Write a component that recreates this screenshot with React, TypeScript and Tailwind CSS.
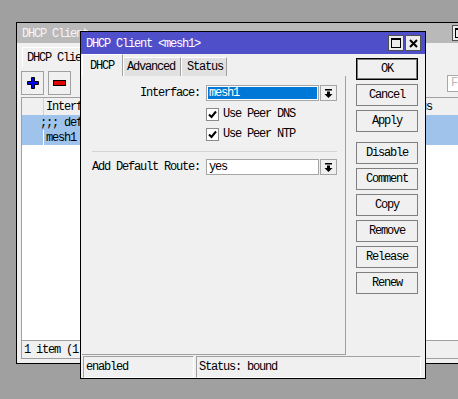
import React from "react";

const mono = "font-mono text-[12px] leading-[14px] tracking-[-1.2px]";

function MaxIcon() {
  return (
    <svg width="10" height="10" viewBox="0 0 10 10">
      <rect x="0.5" y="0.5" width="9" height="9" fill="none" stroke="#000" />
      <rect x="0" y="0" width="10" height="2" fill="#000" />
    </svg>
  );
}

function CloseIcon() {
  return (
    <svg width="9" height="9" viewBox="0 0 9 9">
      <path d="M1 1 L8 8 M8 1 L1 8" stroke="#000" strokeWidth="2" />
    </svg>
  );
}

function TitleBtn({ kind }: { kind: "max" | "close" }) {
  return (
    <div className="w-[16px] h-[16px] flex items-center justify-center bg-[#ececec] border border-[#505050]">
      {kind === "max" ? <MaxIcon /> : <CloseIcon />}
    </div>
  );
}

function DropIcon() {
  return (
    <svg width="9" height="9" viewBox="0 0 9 9">
      <rect x="1" y="0" width="7" height="1.5" fill="#000" />
      <rect x="3" y="2.5" width="3" height="2.5" fill="#000" />
      <path d="M0.5 5 L8.5 5 L4.5 9 Z" fill="#000" />
    </svg>
  );
}

function Check() {
  return (
    <div className="w-[13px] h-[13px] bg-white border border-[#8a8a8a] flex items-center justify-center">
      <svg width="9" height="9" viewBox="0 0 9 9">
        <path d="M1 4.5 L3.5 7 L8 1.5" fill="none" stroke="#000" strokeWidth="2" />
      </svg>
    </div>
  );
}

function SideButton({ label, primary }: { label: string; primary?: boolean }) {
  return (
    <div
      className={`w-[62px] h-[22px] flex items-center justify-center bg-[#f0f0f0] border ${
        primary ? "border-black shadow-[inset_0_0_0_1px_#7a7a7a]" : "border-[#7f7f7f]"
      }`}
    >
      {label}
    </div>
  );
}

function Combo({ value, selected }: { value: string; selected?: boolean }) {
  return (
    <div className="flex">
      <div className="w-[113px] h-[16px] border border-[#a5a5a5] bg-white p-px">
        <div
          className={`h-full flex items-center pl-[1px] ${
            selected ? "bg-[#0078d7] text-white" : "text-black"
          }`}
        >
          {value}
        </div>
      </div>
      <div className="ml-[1px] w-[17px] h-[16px] border border-[#a5a5a5] bg-[#f0f0f0] flex items-center justify-center">
        <DropIcon />
      </div>
    </div>
  );
}

function BackWindow() {
  return (
    <div className={`absolute left-[16px] top-[22px] w-[474px] h-[342px] border border-black bg-[#f0f0f0] flex flex-col ${mono}`}>
      <div className="h-[20px] shrink-0 bg-[#b9b9b9] text-[#f6f6f6] flex items-center pl-[5px] pr-[4px]">
        <span className="mt-[1px]">DHCP Client</span>
        <div className="ml-auto flex gap-[1px]">
          <TitleBtn kind="max" />
          <TitleBtn kind="close" />
        </div>
      </div>
      <div className="mt-[4px] ml-[5px] h-[20px] w-[90px] flex items-center pl-[4px] border-l border-t border-white text-black">
        DHCP Client
      </div>
      <div className="mt-[4px] h-[24px] flex items-center pl-[4px] pr-[5px]">
        <div className="w-[23px] h-[24px] border border-[#a0a0a0] flex items-center justify-center">
          <svg width="12" height="12" viewBox="0 0 12 12">
            <path d="M4.5 0.5 H7.5 V4.5 H11.5 V7.5 H7.5 V11.5 H4.5 V7.5 H0.5 V4.5 H4.5 Z" fill="#0000f0" stroke="#000" />
          </svg>
        </div>
        <div className="ml-[4px] w-[23px] h-[24px] border border-[#a0a0a0] flex items-center justify-center">
          <svg width="13" height="6" viewBox="0 0 13 6">
            <rect x="0.5" y="0.5" width="12" height="5" fill="#e00000" stroke="#000" />
          </svg>
        </div>
        <div className="ml-[9px] w-[23px] h-[24px] border border-[#a0a0a0]" />
        <div className="ml-auto w-[37px] h-[17px] bg-white border border-[#a8a8a8] flex items-center pl-[3px] text-[#b8b8b8]">
          F
        </div>
      </div>
      <div className="mt-[2px] ml-[4px] flex-1 flex flex-col border border-[#a0a0a0] bg-white text-black">
        <div className="h-[17px] flex bg-[#f0f0f0]">
          <div className="w-[22px] border-r border-[#d0d0d0]" />
          <div className="w-[350px] flex items-center pl-[2px] border-r border-[#d0d0d0]">Interface</div>
          <div className="flex items-center pl-[2px]">Status</div>
        </div>
        <div className="h-[15px] flex items-center bg-[#9fc3ea] pl-[18px]">;;; defconf</div>
        <div className="h-[15px] flex bg-[#9fc3ea]">
          <div className="w-[22px] border-r border-white" />
          <div className="flex items-center pl-[2px]">mesh1</div>
        </div>
        <div className="flex-1 border-b border-[#a0a0a0]" />
        <div className="h-[17px] flex items-center pl-[2px] bg-[#f0f0f0]">1 item (1 selected)</div>
      </div>
      <div className="h-[4px] shrink-0" />
    </div>
  );
}

function Dialog() {
  return (
    <div className={`absolute left-[80px] top-[31px] w-[346px] h-[348px] border border-black bg-[#f0f0f0] flex flex-col text-black ${mono}`}>
      <div className="h-[22px] shrink-0 bg-[#4f4fc9] text-white flex items-center pl-[5px] pr-[4px]">
        <span className="mt-[2px]">DHCP Client &lt;mesh1&gt;</span>
        <div className="ml-auto flex gap-[1px]">
          <TitleBtn kind="max" />
          <TitleBtn kind="close" />
        </div>
      </div>
      <div className="flex-1 flex">
        <div className="ml-[1px] w-[264px] flex flex-col">
          <div className="h-[22px] flex items-end">
            <div className="w-[41px] h-[22px] flex items-center pl-[7px] bg-[#f0f0f0] border-l border-t border-white border-r border-r-[#a0a0a0]">
              DHCP
            </div>
            <div className="w-[58px] h-[19px] flex items-center pl-[3px] bg-[#e1e1e1] border-l border-t border-white border-r border-r-[#a0a0a0]">
              Advanced
            </div>
            <div className="w-[46px] h-[19px] flex items-center pl-[5px] bg-[#e1e1e1] border-l border-t border-white border-r border-r-[#a0a0a0]">
              Status
            </div>
          </div>
          <div className="flex-1 flex flex-col pl-[10px] border-r border-b border-[#a0a0a0]">
            <div className="mt-[9px] flex items-center">
              <div className="w-[108px] text-right whitespace-nowrap">Interface:</div>
              <div className="ml-[6px]">
                <Combo value="mesh1" selected />
              </div>
            </div>
            <div className="mt-[6px] ml-[114px] flex items-center gap-[4px]">
              <Check />
              <span>Use Peer DNS</span>
            </div>
            <div className="mt-[6px] ml-[114px] flex items-center gap-[4px]">
              <Check />
              <span>Use Peer NTP</span>
            </div>
            <div className="mt-[10px] w-[245px] h-px bg-[#d4d4d4]" />
            <div className="mt-[7px] flex items-center">
              <div className="w-[108px] text-right whitespace-nowrap">Add Default Route:</div>
              <div className="ml-[6px]">
                <Combo value="yes" />
              </div>
            </div>
          </div>
        </div>
        <div className="ml-[10px] mt-[4px] flex flex-col gap-[4px]">
          <SideButton label="OK" primary />
          <SideButton label="Cancel" />
          <SideButton label="Apply" />
          <div className="mt-[6px]">
            <SideButton label="Disable" />
          </div>
          <SideButton label="Comment" />
          <SideButton label="Copy" />
          <SideButton label="Remove" />
          <SideButton label="Release" />
          <SideButton label="Renew" />
        </div>
      </div>
      <div className="mt-[1px] h-[22px] shrink-0 flex gap-[2px] pl-[2px] pr-[4px]">
        <div className="w-[111px] flex items-center pl-[2px] border-t border-l border-[#a0a0a0] border-b border-r border-b-white border-r-white">
          enabled
        </div>
        <div className="flex-1 flex items-center pl-[2px] border-t border-l border-[#a0a0a0] border-b border-r border-b-white border-r-white">
          Status: bound
        </div>
      </div>
    </div>
  );
}

export default function App() {
  return (
    <div className="relative w-[458px] h-[399px] overflow-hidden bg-[#a0a0a0]">
      <BackWindow />
      <Dialog />
    </div>
  );
}
